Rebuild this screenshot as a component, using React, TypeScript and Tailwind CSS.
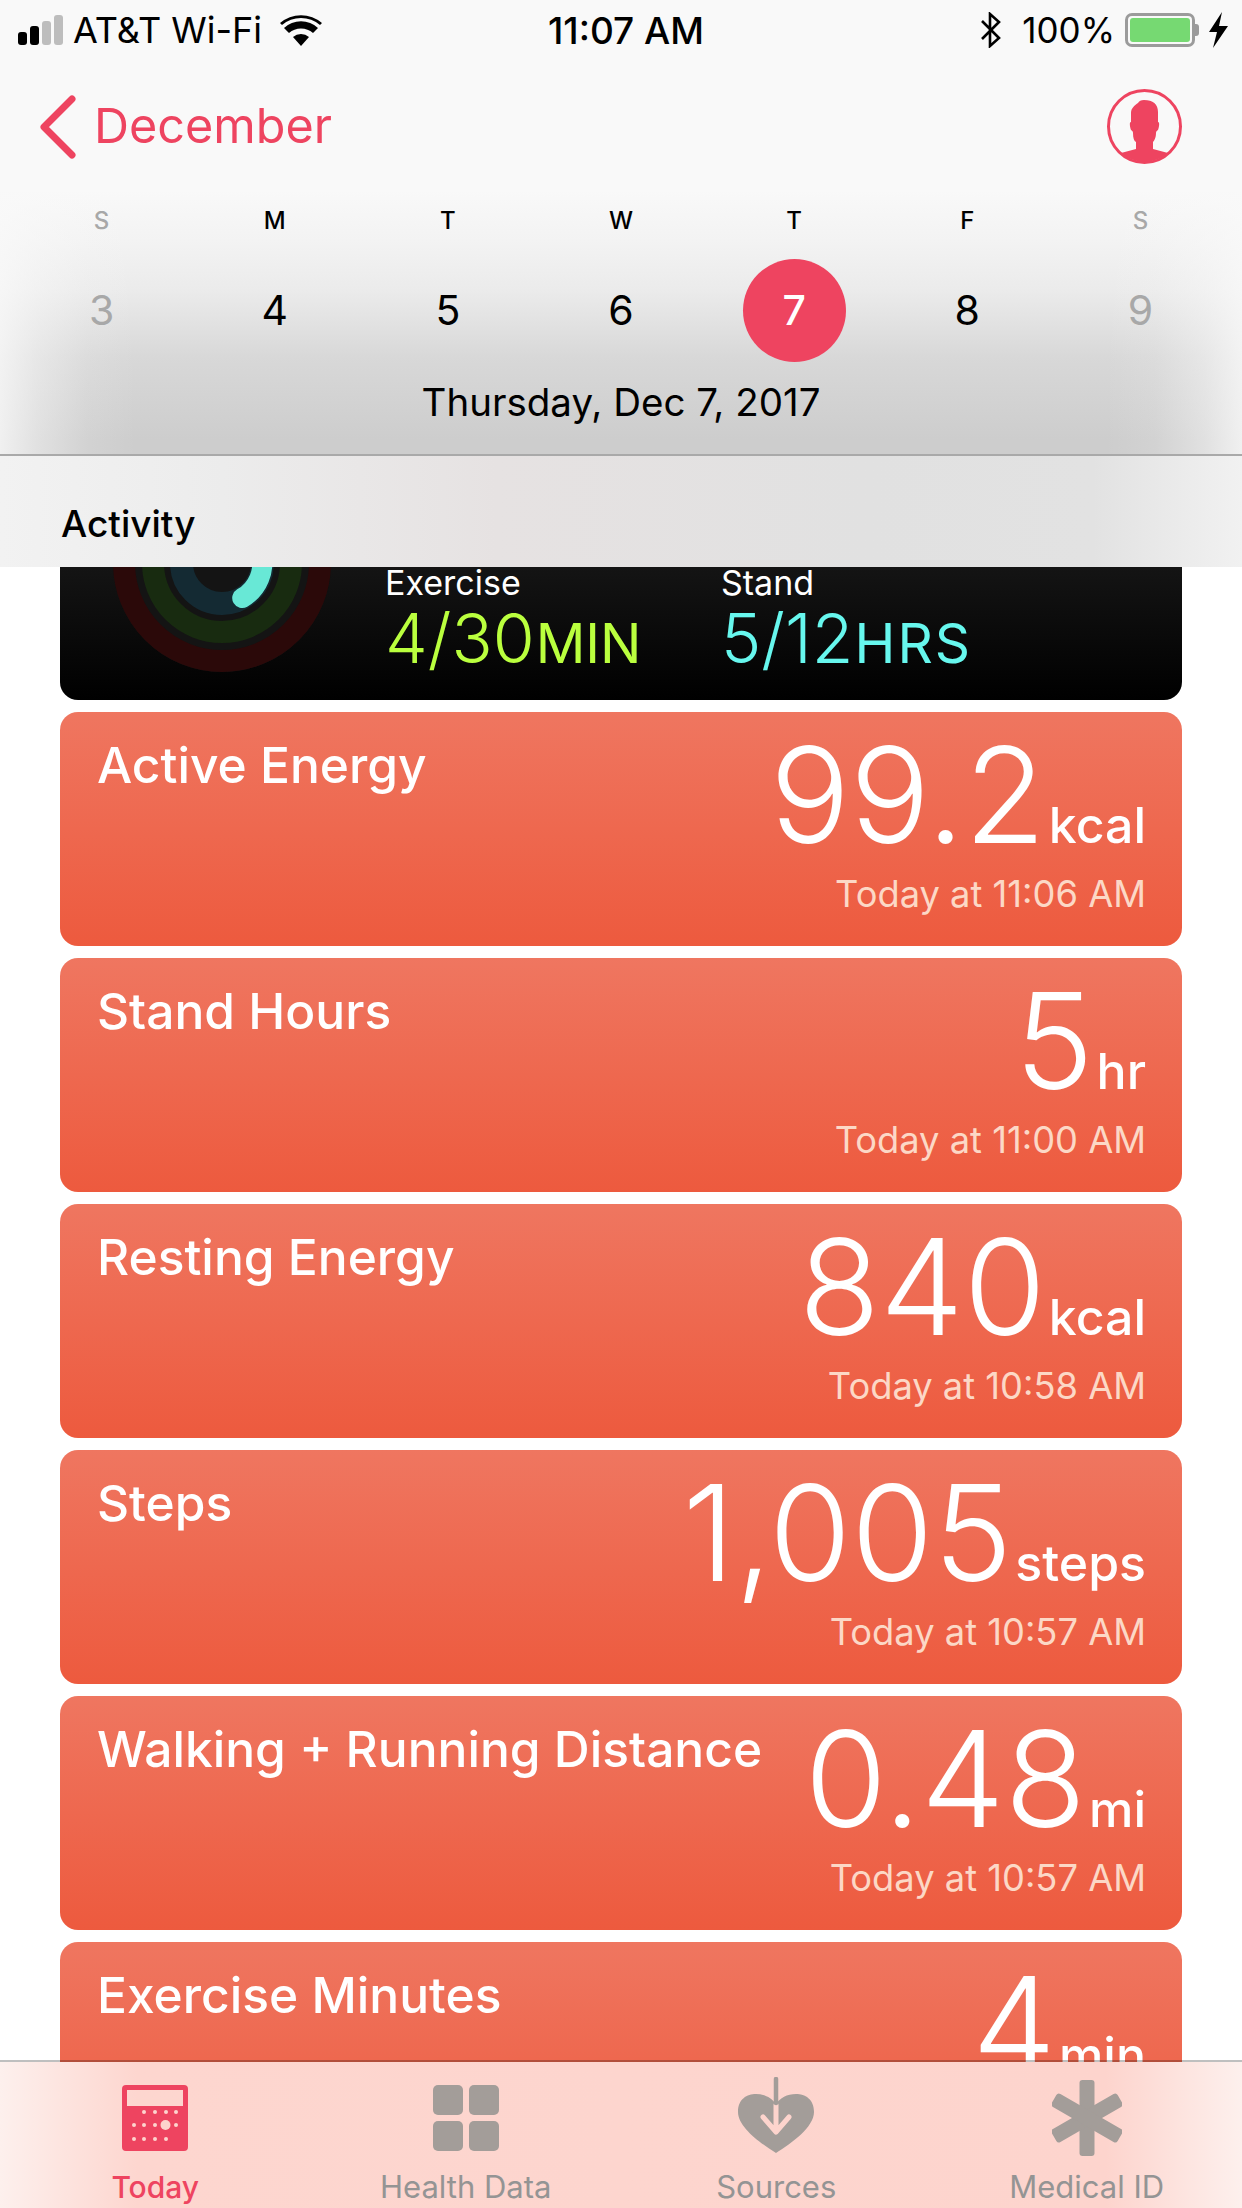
const days = [
  { label: 'S', day: '3', dim: true },
  { label: 'M', day: '4' },
  { label: 'T', day: '5' },
  { label: 'W', day: '6' },
  { label: 'T', day: '7', selected: true },
  { label: 'F', day: '8' },
  { label: 'S', day: '9', dim: true },
];

const metrics = [
  { title: 'Active Energy', value: '99.2', unit: 'kcal', time: 'Today at 11:06 AM' },
  { title: 'Stand Hours', value: '5', unit: 'hr', time: 'Today at 11:00 AM' },
  { title: 'Resting Energy', value: '840', unit: 'kcal', time: 'Today at 10:58 AM' },
  { title: 'Steps', value: '1,005', unit: 'steps', time: 'Today at 10:57 AM' },
  { title: 'Walking + Running Distance', value: '0.48', unit: 'mi', time: 'Today at 10:57 AM' },
  { title: 'Exercise Minutes', value: '4', unit: 'min', time: 'Today at 10:57 AM' },
];

function StatusBar() {
  return (
    <div className="relative flex h-[60px] shrink-0 items-center justify-between pl-[18px] pr-[14px] text-[36px] leading-none text-black">
      <div className="flex items-center">
        <div className="flex items-end gap-[3px]">
          <span className="h-[13px] w-[9px] rounded-[3px] bg-black" />
          <span className="h-[19px] w-[9px] rounded-[3px] bg-black" />
          <span className="h-[24px] w-[9px] rounded-[3px] bg-[#bdbdbd]" />
          <span className="h-[30px] w-[9px] rounded-[3px] bg-[#bdbdbd]" />
        </div>
        <span className="ml-[10px]">AT&amp;T Wi-Fi</span>
        <svg viewBox="0 0 42 32" className="ml-[18px] h-[32px] w-[42px]">
          <path d="M21 32 13 23a12 12 0 0 1 16 0ZM9 19 4 14a25 25 0 0 1 34 0l-5 5a18 18 0 0 0-24 0ZM0 9a32 32 0 0 1 42 0l-2 2a29 29 0 0 0-38 0Z" fill="#000" />
        </svg>
      </div>
      <span className="absolute left-0 right-0 pl-[10px] text-center text-[37px] font-medium">11:07 AM</span>
      <div className="flex items-center">
        <svg viewBox="0 0 22 36" className="h-[36px] w-[22px]">
          <path d="M2 9 19 26 10 34V2L19 10 2 27" fill="none" stroke="#000" strokeWidth="2.6" />
        </svg>
        <span className="ml-[20px] text-[35px]">100%</span>
        <div className="ml-[10px] flex items-center">
          <div className="h-[34px] w-[70px] rounded-[7px] border-[3px] border-[#9b9b9b] p-[2px]">
            <div className="h-full w-full rounded-[3px] bg-[#76d972]" />
          </div>
          <span className="h-[12px] w-[4px] rounded-r-[3px] bg-[#9b9b9b]" />
        </div>
        <svg viewBox="0 0 19 36" className="ml-[10px] h-[36px] w-[19px]">
          <path d="M13 0 0 20h8L4 36 19 14h-9Z" fill="#000" />
        </svg>
      </div>
    </div>
  );
}

function Header() {
  return (
    <div className="relative h-[396px] shrink-0 border-b-2 border-[#a9a9a9] bg-[linear-gradient(to_bottom,#f9f9f9_0px,#f9f9f9_130px,#f3f3f3_180px,#ebebeb_230px,#d8d8d8_297px,#cdcdcd_380px,#cdcdcd_396px)]">
      <div className="absolute inset-0 bg-[linear-gradient(to_right,rgba(249,249,249,0.8),rgba(249,249,249,0.45)_3%,rgba(249,249,249,0.12)_7%,rgba(249,249,249,0)_11%,rgba(249,249,249,0)_89%,rgba(249,249,249,0.12)_93%,rgba(249,249,249,0.45)_97%,rgba(249,249,249,0.8))]" />
      <div className="relative">
        <div className="flex h-[118px] items-center justify-between pl-[39px] pr-[60px] pt-[15px]">
          <div className="flex items-center text-[#ee4460]">
            <svg viewBox="0 0 37 64" className="h-[64px] w-[37px]">
              <path d="M33 4 5 32l28 28" fill="none" stroke="currentColor" strokeWidth="7" strokeLinecap="round" strokeLinejoin="round" />
            </svg>
            <span className="ml-[18px] text-[48.5px] leading-none">December</span>
          </div>
          <svg viewBox="0 0 75 75" className="h-[75px] w-[75px]">
            <circle cx="37.5" cy="37.5" r="36" fill="none" stroke="#ee4460" strokeWidth="3" />
            <path d="M37 11c9 0 14 4 14 12v10c2 0 1 5 0 8-1 1-2 1-2 3 0 5-2 8-3 9v7l15 4a36 36 0 0 1-47 0l15-4v-7c-2-1-3-4-3-9 0-2-1-2-2-3-1-3-2-8 0-8V24c0-5 4-8 7-10 1-2 3-3 6-3Z" fill="#ee4460" />
          </svg>
        </div>
        <div className="mt-[28px] grid grid-cols-7 px-[15px]">
          {days.map((d, i) => (
            <div key={i} className={`flex flex-col items-center ${d.dim ? 'text-[#a8a8a8]' : 'text-black'}`}>
              <span className="text-[24px] leading-[30px] font-medium">{d.label}</span>
              <div
                className={`mt-[23px] flex h-[103px] w-[103px] items-center justify-center rounded-full text-[41px] ${
                  d.selected ? 'bg-[#ee4460] font-medium text-white' : ''
                }`}
              >
                {d.day}
              </div>
            </div>
          ))}
        </div>
        <div className="mt-[17px] text-center text-[38.5px] leading-[46px] text-black">Thursday, Dec 7, 2017</div>
      </div>
    </div>
  );
}

function ActivityCard() {
  return (
    <div className="flex h-[133px] shrink-0 overflow-hidden rounded-b-[18px] bg-[linear-gradient(to_bottom,#141414,#000000)] pl-[53px] text-white">
      <svg viewBox="0 0 218 105" className="h-[105px] w-[218px] shrink-0">
        <circle cx="109" cy="-4" r="109" fill="#141414" />
        <circle cx="109" cy="-4" r="98" fill="none" stroke="#2b0909" strokeWidth="22" />
        <circle cx="109" cy="-4" r="69" fill="none" stroke="#182b10" strokeWidth="22" />
        <circle cx="109" cy="-4" r="40.5" fill="none" stroke="#142a33" strokeWidth="23" />
        <path d="M109-44.5A40.5 40.5 0 0 1 129.2 31" fill="none" stroke="#68e8d6" strokeWidth="20" strokeLinecap="round" />
      </svg>
      <div className="ml-[54px] w-[336px]">
        <div className="text-[34px] leading-[32px]">Exercise</div>
        <div className="mt-[4px] flex items-baseline text-[#baff3e]">
          <span className="text-[68px] leading-[70px] font-light">4/30</span>
          <span className="ml-[1px] text-[55px] leading-[70px] font-normal">MIN</span>
        </div>
      </div>
      <div>
        <div className="text-[34px] leading-[32px]">Stand</div>
        <div className="mt-[4px] flex items-baseline text-[#67f7ee]">
          <span className="text-[68px] leading-[70px] font-light">5/12</span>
          <span className="ml-[1px] text-[55px] leading-[70px] font-normal tracking-[2px]">HRS</span>
        </div>
      </div>
    </div>
  );
}

function MetricCard({ title, value, unit, time }: { title: string; value: string; unit: string; time: string }) {
  return (
    <div className="flex h-[234px] shrink-0 justify-between rounded-[18px] bg-[linear-gradient(to_bottom,#ef7660,#ed5a3e)] pl-[37px] pr-[36px] text-white">
      <div className="pt-[25px] text-[49.7px] leading-[56px] font-medium">{title}</div>
      <div className="flex flex-col items-end pt-[17px]">
        <div className="flex h-[132px] items-baseline">
          <span className="text-[133px] leading-[132px] font-light">{value}</span>
          <span className="ml-[3px] text-[50px] leading-none font-medium">{unit}</span>
        </div>
        <div className="mt-[12px] text-[36.3px] leading-[42px] text-[#fcd8c6]">{time}</div>
      </div>
    </div>
  );
}

function TabBar() {
  const tabClass = 'flex flex-col items-center';
  return (
    <div className="relative z-10 -mt-[2px] grid h-[148px] shrink-0 grid-cols-4 border-t-2 border-[rgba(0,0,0,0.25)] bg-[linear-gradient(to_right,#fdf0ed,#fdd6cf_11%,#fdd4cd_89%,#fdf0ed)] bg-clip-padding text-[#949494]">
      <div className={tabClass}>
        <svg viewBox="0 0 66 66" className="mt-[23px] h-[66px] w-[66px]">
          <path d="M4 0h58a4 4 0 0 1 4 4v58a4 4 0 0 1-4 4H4a4 4 0 0 1-4-4V4a4 4 0 0 1 4-4Zm1 5v16h56V5Z" fill="#ee4460" fillRule="evenodd" />
          {[22, 33, 44, 54].map((x) => <circle key={x} cx={x} cy="27" r="2" fill="#fdd4cd" />)}
          {[12, 22, 33, 54].map((x) => <circle key={x} cx={x} cy="40" r="2" fill="#fdd4cd" />)}
          <ellipse cx="43.5" cy="40" rx="5" ry="5" fill="#fdd4cd" />
          {[12, 22, 33, 44].map((x) => <circle key={x} cx={x} cy="54" r="2" fill="#fdd4cd" />)}
        </svg>
        <span className="mt-[18px] text-[30px] leading-[36px] font-medium text-[#ee4460]">Today</span>
      </div>
      <div className={tabClass}>
        <div className="mt-[23px] grid h-[66px] w-[66px] grid-cols-2 gap-[6px]">
          <span className="rounded-[5px] bg-[#a39d99]" />
          <span className="rounded-[5px] bg-[#a39d99]" />
          <span className="rounded-[5px] bg-[#a39d99]" />
          <span className="rounded-[5px] bg-[#a39d99]" />
        </div>
        <span className="mt-[18px] text-[31px] leading-[36px]">Health Data</span>
      </div>
      <div className={tabClass}>
        <svg viewBox="0 0 76 76" className="mt-[15px] h-[76px] w-[76px]">
          <path d="M38 76C22 66 0 50 0 35 0 22 9 17 18 17c9 0 16 4 20 10 4-6 11-10 20-10 9 0 18 5 18 18 0 15-22 31-38 41Z" fill="#a39d99" />
          <path d="M38 28v26M25 40l13 15 13-15" fill="none" stroke="#fdd4cd" strokeWidth="5" strokeLinecap="round" strokeLinejoin="round" />
          <path d="M38 2v24" fill="none" stroke="#a39d99" strokeWidth="4.5" strokeLinecap="round" />
        </svg>
        <span className="mt-[16px] text-[31px] leading-[36px]">Sources</span>
      </div>
      <div className={tabClass}>
        <svg viewBox="0 0 70 76" className="mt-[18px] h-[76px] w-[70px]">
          <g fill="#a39d99">
            <rect x="27.5" y="0" width="15" height="76" rx="3" />
            <rect x="27.5" y="0" width="15" height="76" rx="3" transform="rotate(60 35 38)" />
            <rect x="27.5" y="0" width="15" height="76" rx="3" transform="rotate(-60 35 38)" />
          </g>
        </svg>
        <span className="mt-[13px] text-[31px] leading-[36px]">Medical ID</span>
      </div>
    </div>
  );
}

export default function App() {
  return (
    <div className="flex h-[2208px] w-[1242px] flex-col overflow-hidden bg-white font-['Inter','Liberation_Sans',sans-serif]">
      <div className="shrink-0 bg-[#f9f9f9]">
        <StatusBar />
      </div>
      <Header />
      <div className="flex h-[111px] shrink-0 items-end bg-[linear-gradient(to_right,#f2f2f2,#ececec_18%,#e6e2e2_40%,#e1e1e1_70%,#e2e2e2_88%,#f1f1f1)] pb-[22px] pl-[61px] text-[37px] leading-[42px] font-medium text-black">
        Activity
      </div>
      <div className="flex min-h-0 flex-1 flex-col gap-[12px] overflow-hidden px-[60px]">
        <ActivityCard />
        {metrics.map((m) => (
          <MetricCard key={m.title} {...m} />
        ))}
      </div>
      <TabBar />
    </div>
  );
}
